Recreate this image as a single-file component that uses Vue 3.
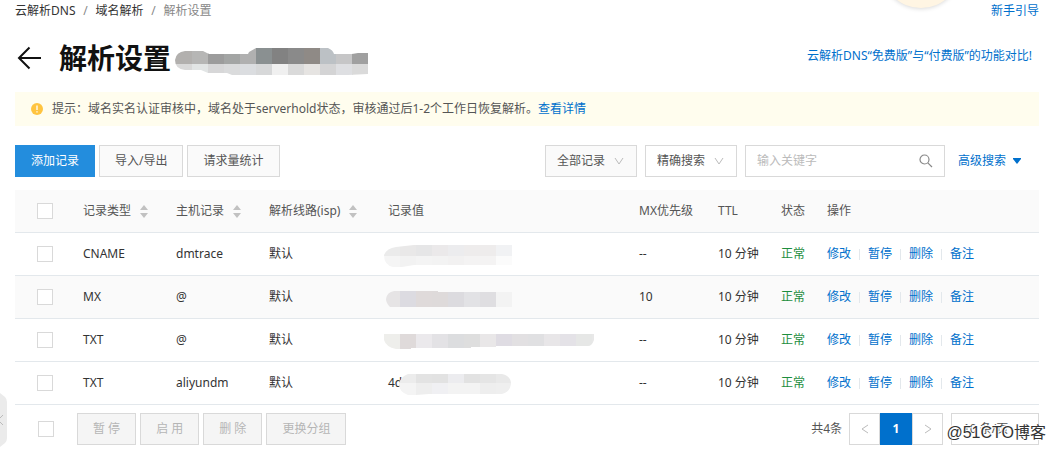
<script setup>
import { ref, computed } from 'vue'

const keyword = ref('')
const scope = ref('全部记录')
const mode = ref('精确搜索')
const pageSize = ref('10 条/页')
const selected = ref([])
const hovered = ref(2)

const columns = [
    { key: 'type', title: '记录类型', sortable: true },
    { key: 'host', title: '主机记录', sortable: true },
    { key: 'line', title: '解析线路(isp)', sortable: true },
    { key: 'value', title: '记录值' },
    { key: 'mx', title: 'MX优先级' },
    { key: 'ttl', title: 'TTL' },
    { key: 'status', title: '状态' },
    { key: 'action', title: '操作' }
]

const actions = ['修改', '暂停', '删除', '备注']
const batchActions = ['暂 停', '启 用', '删 除', '更换分组']

// masks: every band is a row of 16px blocks, clipped by a rounded outline
const titleMask = {
    width: 193,
    height: 30,
    shape: 'M10 6H28L34 9H73L74 7L81 3H153Q158 5 159 9H177L183 8H193V29L173 30H57L52 28H33L26 25H10Q0 24 0 15Q1 7 10 6Z',
    bands: [
        { y: 0, h: 19, colors: ['#b2b0ae', '#b6b6b5', '#9c9c9c', '#a3a5a4', '#b0b0b0', '#8a9091', '#828282', '#8a8a8a', '#8f8a86', '#bcc1c5', '#c6c6c7', '#a0a0a0'] },
        { y: 19, h: 11, colors: ['#d9d9d9', '#e2e5e5', '#d7d7d8', '#dadbdc', '#dbdde0', '#d7d8d9', '#f0f0f0', '#dadada', '#e6e4e2', '#d4d4d5', '#dedfe2', '#dadada'] }
    ]
}

const rows = [
    {
        id: 1, type: 'CNAME', host: 'dmtrace', line: '默认', value: '', mx: '--', ttl: '10 分钟', status: '正常',
        mask: {
            shape: 'M12 2L30 0H128V20H30L18 22H9Q0 20 0 10Q3 3 12 2Z',
            bands: [
                { y: 0, h: 11, colors: ['#ebebeb', '#e9e8e8', '#e6e6e7', '#ebe9ea', '#ececee', '#eeecec', '#eeecec', '#f1f2f4'] },
                { y: 11, h: 11, colors: ['#f5f5f5', '#f2f2f2', '#f4f4f4', '#f3f3f3', '#f2f1f1', '#f4f3f3', '#f4f3f3', '#fbfbfb'] }
            ]
        }
    },
    {
        id: 2, type: 'MX', host: '@', line: '默认', value: '', mx: '10', ttl: '10 分钟', status: '正常',
        mask: {
            shape: 'M10 0H54V1H128V16H6Q2 12 2 8Q3 1 10 0Z',
            bands: [
                { y: 0, h: 16, colors: ['#e6e4e5', '#dcdbe1', '#dfdada', '#dedada', '#dcdbdf', '#e2e2e5', '#dfdee1', '#f3f3f3'] }
            ]
        }
    },
    {
        id: 3, type: 'TXT', host: '@', line: '默认', value: '', mx: '--', ttl: '10 分钟', status: '正常',
        mask: {
            shape: 'M0 0H210V6Q208 12 204 12H112V13H87V14H27V15H12Q2 13 0 6Z',
            bands: [
                { y: 0, h: 15, colors: ['#eeeeeb', '#dfdada', '#ebe9ec', '#e3e2e5', '#dcdddf', '#dedede', '#e9e7e8', '#dfdce3', '#e2e0e2', '#e0e0e2', '#e8e6e8', '#e4e2e7', '#e6e7e6', '#e8e8e8'] }
            ]
        }
    },
    {
        id: 4, type: 'TXT', host: 'aliyundm', line: '默认', value: '4d', mx: '--', ttl: '10 分钟', status: '正常',
        mask: {
            shape: 'M24 0H118Q127 2 127 10Q126 18 118 20H45L32 21H24Q15 18 15 10Q16 3 24 0Z',
            bands: [
                { y: 0, h: 9, colors: ['#ededed', '#ececec', '#e3e3e3', '#e2e2e2', '#ececef', '#e2e2e2', '#e5e5e5', '#e9e9e9'] },
                { y: 9, h: 12, colors: ['#f3f3f3', '#f4f4f4', '#eeeeee', '#f0f0f3', '#f3f3f3', '#f3f3f3', '#eeeeee', '#efefef'] }
            ]
        }
    }
]

const maskHeight = (mask) => Math.max(...mask.bands.map(b => b.y + b.h))

const allChecked = computed({
    get: () => selected.value.length === rows.length,
    set: (val) => { selected.value = val ? rows.map(r => r.id) : [] }
})
</script>

<template>
    <div class="page">
        <div class="guide-bubble"></div>
        <nav class="crumbs">
            <a href="#">云解析DNS</a>
            <span class="slash">/</span>
            <a href="#">域名解析</a>
            <span class="slash">/</span>
            <span class="current">解析设置</span>
            <a href="#" class="link guide">新手引导</a>
        </nav>

        <header class="title-row">
            <button class="back" aria-label="返回">
                <svg width="24" height="24" viewBox="0 0 24 24">
                    <path d="M12.500 1.500L2 12L12.500 22.500M2 12H24" fill="none" stroke="#111" stroke-width="2" />
                </svg>
            </button>
            <h1>解析设置</h1>
            <svg class="title-mask" :width="titleMask.width" :height="titleMask.height">
                <clipPath id="mask-title"><path :d="titleMask.shape" /></clipPath>
                <g clip-path="url(#mask-title)" shape-rendering="crispEdges">
                    <template v-for="band in titleMask.bands" :key="band.y">
                        <rect v-for="(c, i) in band.colors" :key="i" :x="i ? i * 16 + 1 : 0" :y="band.y" width="17"
                            :height="band.h" :fill="c" />
                    </template>
                </g>
            </svg>
            <a href="#" class="link compare">云解析DNS“免费版”与“付费版”的功能对比!</a>
        </header>

        <div class="notice">
            <svg width="12" height="12" viewBox="0 0 12 12">
                <circle cx="6" cy="6" r="6" fill="#ffc440" />
                <path d="M6 2.500V7M6 8.200V9.500" stroke="#fff" stroke-width="1.300" />
            </svg>
            <p>提示：域名实名认证审核中，域名处于serverhold状态，审核通过后1-2个工作日恢复解析。<a href="#" class="link">查看详情</a></p>
        </div>

        <div class="toolbar">
            <button class="btn primary">添加记录</button>
            <button class="btn">导入/导出</button>
            <button class="btn">请求量统计</button>
            <div class="filters">
                <div class="select gray">
                    <select v-model="scope" aria-label="记录范围">
                        <option>全部记录</option>
                    </select>
                    <svg width="10" height="8" viewBox="0 0 10 8"><path d="M1 1L5 7L9 1" /></svg>
                </div>
                <div class="select">
                    <select v-model="mode" aria-label="搜索方式">
                        <option>精确搜索</option>
                    </select>
                    <svg width="10" height="8" viewBox="0 0 10 8"><path d="M1 1L5 7L9 1" /></svg>
                </div>
                <div class="search">
                    <input v-model="keyword" type="text" placeholder="输入关键字" aria-label="关键字" />
                    <button aria-label="搜索">
                        <svg width="14" height="14" viewBox="0 0 14 14">
                            <circle cx="5.500" cy="5.500" r="4.500" />
                            <path d="M8.800 8.800L13 13" />
                        </svg>
                    </button>
                </div>
                <a href="#" class="link advanced">高级搜索
                    <svg width="8" height="6" viewBox="0 0 8 6"><path d="M0 0H8V1L4 6L0 1Z" fill="#0070cc" /></svg>
                </a>
            </div>
        </div>

        <table>
            <colgroup>
                <col class="c-check" />
                <col v-for="col in columns" :key="col.key" :class="'c-' + col.key" />
            </colgroup>
            <thead>
                <tr>
                    <th class="check"><input v-model="allChecked" type="checkbox" aria-label="全选" /></th>
                    <th v-for="col in columns" :key="col.key">
                        <span class="th-inner">
                            {{ col.title }}
                            <svg v-if="col.sortable" width="8" height="13" viewBox="0 0 8 13">
                                <path d="M0 5L4 0L8 5ZM0 8H8L4 13Z" fill="#c1c1c1" />
                            </svg>
                        </span>
                    </th>
                </tr>
            </thead>
            <tbody>
                <tr v-for="row in rows" :key="row.id" :class="{ hovered: hovered === row.id }"
                    @mouseenter="hovered = row.id">
                    <td class="check">
                        <input v-model="selected" type="checkbox" :value="row.id" :aria-label="row.type + ' ' + row.host" />
                    </td>
                    <td>{{ row.type }}</td>
                    <td>{{ row.host }}</td>
                    <td>{{ row.line }}</td>
                    <td>
                        <div class="value">
                            <span>{{ row.value }}</span>
                            <svg class="value-mask" width="210" :height="maskHeight(row.mask)">
                                <clipPath :id="'mask-' + row.id"><path :d="row.mask.shape" /></clipPath>
                                <g :clip-path="`url(#mask-${row.id})`" shape-rendering="crispEdges">
                                    <template v-for="band in row.mask.bands" :key="band.y">
                                        <rect v-for="(c, i) in band.colors" :key="i" :x="i * 16" :y="band.y" width="16"
                                            :height="band.h" :fill="c" />
                                    </template>
                                </g>
                            </svg>
                        </div>
                    </td>
                    <td>{{ row.mx }}</td>
                    <td>{{ row.ttl }}</td>
                    <td class="ok">{{ row.status }}</td>
                    <td>
                        <div class="actions">
                            <a v-for="a in actions" :key="a" href="#" class="link">{{ a }}</a>
                        </div>
                    </td>
                </tr>
            </tbody>
        </table>

        <footer>
            <input v-model="allChecked" type="checkbox" aria-label="全选" />
            <div class="batch">
                <button v-for="b in batchActions" :key="b" class="btn" disabled>{{ b }}</button>
            </div>
            <span class="total">共4条</span>
            <div class="pager">
                <button aria-label="上一页">
                    <svg width="8" height="10" viewBox="0 0 8 10"><path d="M7 1L1 5L7 9" /></svg>
                </button>
                <button class="on">1</button>
                <button aria-label="下一页">
                    <svg width="8" height="10" viewBox="0 0 8 10"><path d="M1 1L7 5L1 9" /></svg>
                </button>
            </div>
            <div class="select size">
                <select v-model="pageSize" aria-label="每页条数">
                    <option>10 条/页</option>
                </select>
            </div>
        </footer>

        <button class="side-tab" aria-label="收起">
            <svg width="7" height="54" viewBox="0 0 7 54">
                <path d="M0 0L5 4Q7 6 7 9V45Q7 48 5 50L0 54Z" fill="#ebebeb" />
                <path d="M3 22L-2 27L3 32" fill="none" stroke="#bbb" />
            </svg>
        </button>
        <div class="watermark">@51CTO博客</div>
    </div>
</template>

<style>
body {
    margin: 0;
    background: #fff;
}
</style>

<style scoped>
.page {
    position: relative;
    overflow: hidden;
    padding: 0 16px 6px 15px;
    font: 12px/18px "Noto Sans", "Noto Sans CJK SC", sans-serif;
    color: #333;
}

.page button,
.page input,
.page select {
    font: inherit;
    color: inherit;
    margin: 0;
    border-radius: 0;
    box-sizing: border-box;
}

a {
    color: #333;
    text-decoration: none;
}

.link {
    color: #0070cc;
}

.guide-bubble {
    position: absolute;
    top: -72px;
    right: 94px;
    width: 80px;
    height: 80px;
    border-radius: 50%;
    background: #fff5e3;
    box-shadow: 0 1px 4px rgba(0, 0, 0, 0.15);
}

.crumbs {
    display: flex;
    padding-top: 2px;
}

.slash {
    width: 20px;
    text-align: center;
    color: #888;
}

.current {
    color: #888;
}

.guide {
    margin-left: auto;
}

.title-row {
    display: flex;
    align-items: center;
    height: 40px;
    margin-top: 18px;
}

.page .back {
    display: flex;
    padding: 0;
    margin-left: 2px;
    border: 0;
    background: none;
}

h1 {
    margin: 0 4px 0 18px;
    font-size: 28px;
    line-height: 40px;
    font-weight: 700;
    color: #111;
}

.title-mask {
    margin-top: 4px;
}

.compare {
    margin-left: auto;
    padding: 0 7px 4px 0;
}

.notice {
    display: flex;
    align-items: center;
    gap: 9px;
    height: 34px;
    margin-top: 14px;
    padding-left: 16px;
    background: #fffdee;
    color: #555;
}

.notice p {
    margin: 0;
}

.toolbar {
    display: flex;
    gap: 4px;
    margin-top: 19px;
}

.btn {
    height: 32px;
    padding: 0 15px;
    border: 1px solid #d9d9d9;
    background: #fafafa;
}

.page .btn {
    color: #555;
}

.page .btn.primary {
    border-color: #238ddd;
    background: #238ddd;
    color: #fff;
}

.page .btn:disabled {
    background: #f5f5f5;
    color: #b5b5b5;
}

.filters {
    display: flex;
    gap: 8px;
    margin-left: auto;
    padding-right: 18px;
}

.select {
    position: relative;
    width: 92px;
}

.select select {
    appearance: none;
    width: 100%;
    height: 32px;
    padding: 0 11px;
    border: 1px solid #d9d9d9;
    background: #fff;
    outline: none;
}

.page .select select {
    color: #555;
}

.select.gray select {
    background: #fafafa;
}

.select svg {
    position: absolute;
    top: 12px;
    right: 13px;
    fill: none;
    stroke: #bbb;
    pointer-events: none;
}

.search {
    display: flex;
    align-items: center;
    box-sizing: border-box;
    width: 200px;
    height: 32px;
    border: 1px solid #d9d9d9;
}

.search input {
    flex: 1;
    min-width: 0;
    padding: 0 11px;
    border: 0;
    outline: none;
    background: none;
}

.search input::placeholder {
    color: #bbb;
}

.search button {
    display: flex;
    padding: 0 11px;
    border: 0;
    background: none;
}

.search svg {
    fill: none;
    stroke: #888;
    stroke-width: 1.2;
}

.advanced {
    display: flex;
    align-items: center;
    gap: 7px;
    padding-left: 5px;
}

table {
    width: 100%;
    margin-top: 13px;
    border-collapse: separate;
    border-spacing: 0;
    table-layout: fixed;
}

.c-check { width: 60px; }
.c-type { width: 93px; }
.c-host { width: 93px; }
.c-line { width: 119px; }
.c-mx { width: 79px; }
.c-ttl { width: 63px; }
.c-status { width: 46px; }
.c-action { width: 220px; }

th,
td {
    height: 42px;
    padding: 0 8px;
    border-bottom: 1px solid #e3e8ec;
    text-align: left;
    white-space: nowrap;
}

th {
    background: #fafafa;
    font-weight: 400;
    color: #555;
}

.hovered {
    background: #fafafa;
}

.check {
    padding-left: 22px;
}

input[type="checkbox"] {
    appearance: none;
    display: block;
    width: 16px;
    height: 16px;
    border: 1px solid #d9d9d9;
    background: #fff;
}

input[type="checkbox"]:checked {
    background: #0070cc;
}

.th-inner {
    display: flex;
    align-items: center;
    gap: 9px;
}

.value {
    position: relative;
    display: flex;
    align-items: center;
    height: 22px;
}

.value-mask {
    position: absolute;
    left: -4px;
    margin-top: 3px;
}

.ok {
    color: #1e8e3e;
}

.actions {
    display: flex;
}

.actions a + a {
    position: relative;
    margin-left: 17px;
}

.actions a + a::before {
    content: "";
    position: absolute;
    left: -9px;
    top: 4px;
    width: 1px;
    height: 11px;
    background: #e3e8ec;
}

footer {
    display: flex;
    align-items: center;
    padding: 8px 0 0 23px;
}

.batch {
    display: flex;
    gap: 4px;
    margin-left: 23px;
}

.total {
    margin-left: auto;
    color: #555;
}

.pager {
    display: flex;
    margin: 0 8px 0 7px;
}

.pager button {
    display: flex;
    align-items: center;
    justify-content: center;
    width: 31px;
    height: 32px;
    padding: 0;
    border: 1px solid #d9d9d9;
    background: #fff;
}

.page .pager .on {
    width: 32px;
    border-color: #0070cc;
    background: #0070cc;
    color: #fff;
    font-weight: 700;
}

.pager svg {
    fill: none;
    stroke: #bbb;
}

.size {
    width: 88px;
}

.side-tab {
    position: absolute;
    left: 0;
    bottom: 4px;
    display: flex;
    padding: 0;
    border: 0;
    background: none;
}

.watermark {
    position: absolute;
    right: 9px;
    bottom: 6px;
    font: 16px/24px "Liberation Sans", "Noto Sans CJK SC", sans-serif;
    color: #333;
    text-shadow: 1px 1px 0 #fff, -1px -1px 0 #fff;
    pointer-events: none;
}
</style>
